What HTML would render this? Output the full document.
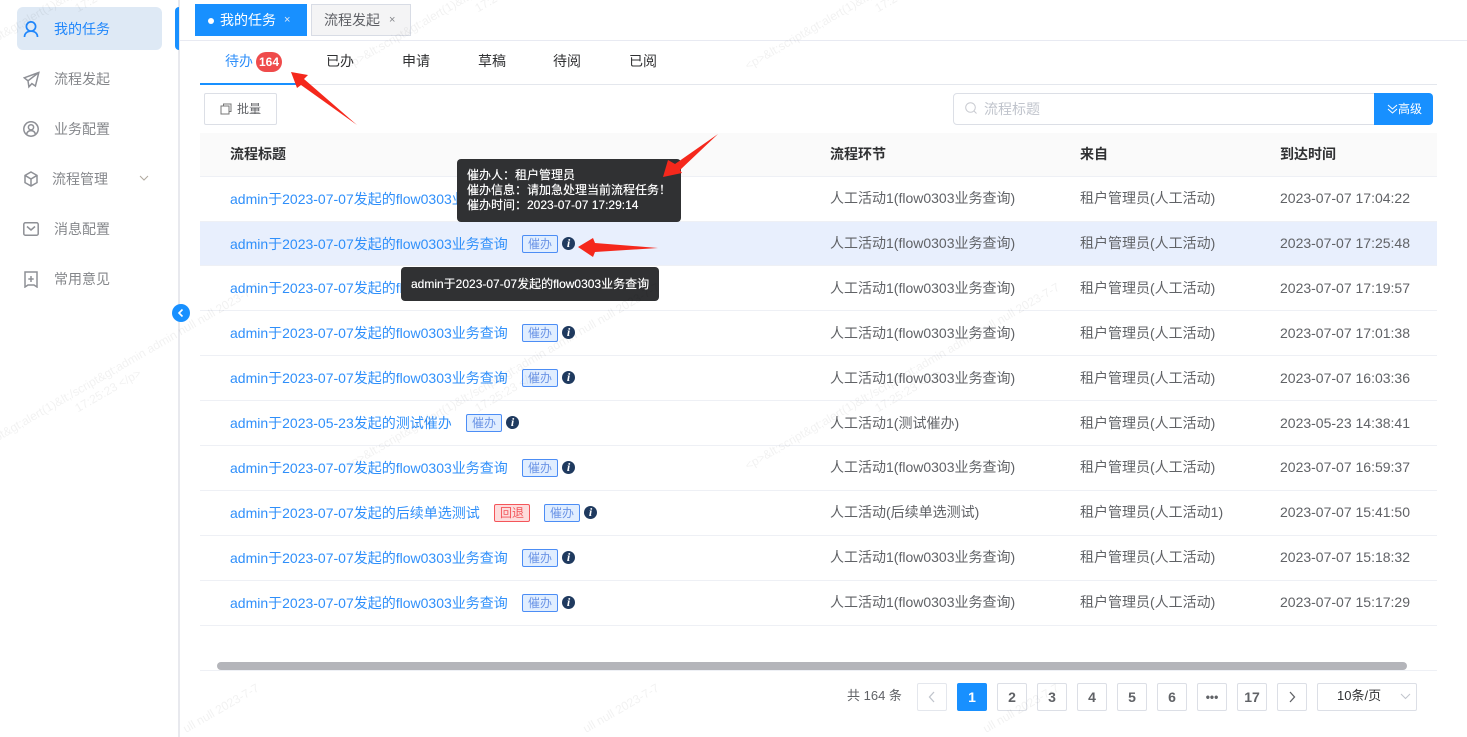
<!DOCTYPE html>
<html lang="zh"><head><meta charset="utf-8"><title>我的任务</title>
<style>
*{box-sizing:border-box}
html,body{margin:0;padding:0;width:1467px;height:737px;overflow:hidden;background:#fff;font-family:"Liberation Sans","Noto Sans CJK SC",sans-serif;font-size:14px;color:#606266}
.a{position:absolute;white-space:nowrap}
.side{position:absolute;left:0;top:0;width:180px;height:737px;border-right:2px solid #e8e9ee}
.nav{position:absolute;left:54px;color:#85878b;line-height:20px}
.ic{position:absolute;fill:none;stroke:#8e9096;stroke-width:1.5}
.row{position:absolute;left:200px;width:1237px;height:45px;border-bottom:1px solid #eef0f5}
.row span{position:absolute;top:12px;line-height:20px;white-space:nowrap}
.row .t{left:30px;color:#2f8ffa}
.row .c{left:630px}.row .f{left:880px}.row .d{left:1080px}
.row.u .c,.row.u .f,.row.u .d{top:11px}
.row .tag{top:13px;height:18px;width:36px;line-height:16px;border:1px solid #4c8df5;background:#e1eeff;color:#6c95e6;font-size:12px;text-align:center;border-radius:2px}
.row .tag.r{border-color:#f4555a;background:#fddcdc;color:#f2555a}
.row .i{top:15px;width:13px;height:13px;line-height:13px;border-radius:50%;background:#1f3a5f;color:#fff;font:italic bold 12px/13px "Liberation Serif",serif;text-align:center}
.th{position:absolute;top:144px;font-weight:bold;color:#303133;line-height:20px}
.tab{position:absolute;top:51px;line-height:20px;color:#303133}
.pg{position:absolute;top:683px;width:30px;height:28px;border:1px solid #dcdfe6;border-radius:2px;background:#fff;text-align:center;line-height:26px;font-weight:bold;color:#606266;font-size:14px}
.tip{position:absolute;background:#303133;color:#fff;border-radius:4px;font-size:12px;white-space:nowrap;text-shadow:0 0 .4px #fff}
</style></head><body>

<div class="side"></div>
<div class="a" style="left:17px;top:7px;width:145px;height:43px;background:#dee9f5;border-radius:6px"></div>
<div class="a" style="left:175px;top:7px;width:4px;height:43px;background:#1890ff;border-radius:4px 0 0 4px"></div>

<svg class="ic" style="left:22px;top:20px;stroke:#1f86fb;stroke-width:1.7" width="18" height="18" viewBox="0 0 18 18"><circle cx="9" cy="6.500" r="4.600"/><path d="M2.500 17c0-3.600 2.600-5.800 6.500-5.800s6.500 2.200 6.500 5.800"/></svg>
<div class="nav" style="left:54px;top:19px;color:#1f86fb">我的任务</div>

<svg class="ic" style="left:23px;top:71px" width="17" height="18" viewBox="0 0 17 18"><path d="M15.800 1.500 1.200 6.800l3.800 3 .9 6 3-3.200 3.500 2.400zM5 9.800 15.800 1.500"/></svg>
<div class="nav" style="top:69px">流程发起</div>

<svg class="ic" style="left:23px;top:121px" width="16" height="16" viewBox="0 0 16 16"><circle cx="8" cy="8" r="7.200"/><circle cx="8" cy="6.300" r="2.600"/><path d="M3.500 13.500c.5-2.600 2.300-3.900 4.500-3.900s4 1.300 4.500 3.900"/></svg>
<div class="nav" style="top:119px">业务配置</div>

<svg class="ic" style="left:24px;top:171px" width="14" height="16" viewBox="0 0 14 16"><path d="M7 1 13 4.400v7.200L7 15 1 11.600V4.400zM1.500 4.700 7 8l5.500-3.300M7 8v6.500"/></svg>
<div class="nav" style="left:52px;top:169px">流程管理</div>
<svg class="ic" style="left:139px;top:175px;stroke:#b0a99e;stroke-width:1" width="10" height="6" viewBox="0 0 10 6"><path d="M1 1l4 4 4-4"/></svg>

<svg class="ic" style="left:23px;top:222px" width="16" height="14" viewBox="0 0 16 14"><rect x=".8" y=".8" width="14.400" height="12.400" rx="1.500"/><path d="M4 4.500 8 8l4-3.500"/></svg>
<div class="nav" style="top:219px">消息配置</div>

<svg class="ic" style="left:24px;top:271px" width="14" height="17" viewBox="0 0 14 17"><path d="M1 1h12v15l-3-2H4l-3 2zM7 5v6M4.300 8h5.400"/></svg>
<div class="nav" style="top:269px">常用意见</div>

<div class="a" style="left:172px;top:304px;width:18px;height:18px;border-radius:50%;background:#1890ff"></div>
<svg class="a" style="left:172px;top:304px" width="18" height="18" viewBox="0 0 18 18"><path d="M10.500 5.500 7 9l3.500 3.500" fill="none" stroke="#fff" stroke-width="1.600"/></svg>

<div class="a" style="left:195px;top:4px;width:112px;height:32px;background:#1890ff"></div>
<div class="a" style="left:208px;top:18px;width:6px;height:6px;border-radius:50%;background:#fff"></div>
<div class="a" style="left:220px;top:10px;line-height:20px;color:#fff">我的任务</div>
<div class="a" style="left:284px;top:11px;line-height:18px;color:#dfe9f7;font-size:11px">×</div>
<div class="a" style="left:311px;top:4px;width:100px;height:32px;background:#f4f4f5;border:1px solid #d8dce5"></div>
<div class="a" style="left:324px;top:10px;line-height:20px;color:#5f6166">流程发起</div>
<div class="a" style="left:389px;top:11px;line-height:18px;color:#85878b;font-size:11px">×</div>
<div class="a" style="left:180px;top:40px;width:1287px;height:1px;background:#e8eaf2"></div>

<div class="tab" style="left:225px;color:#2f8ffa">待办</div>
<div class="a" style="left:256px;top:52px;width:26px;height:20px;border-radius:10px;background:#ef4b4b;color:#fff;font-size:12px;font-weight:bold;line-height:20px;text-align:center">164</div>
<div class="tab" style="left:326px">已办</div>
<div class="tab" style="left:402px">申请</div>
<div class="tab" style="left:478px">草稿</div>
<div class="tab" style="left:553px">待阅</div>
<div class="tab" style="left:629px">已阅</div>
<div class="a" style="left:200px;top:84px;width:1237px;height:1px;background:#e4e7ed"></div>
<div class="a" style="left:200px;top:83px;width:96px;height:2px;background:#1890ff"></div>

<div class="a" style="left:204px;top:93px;width:73px;height:32px;border:1px solid #dcdfe6;border-radius:2px"></div>
<svg class="a" style="left:220px;top:103px" width="12" height="12" viewBox="0 0 12 12"><path d="M3.500 2.500V1h7.500v7.500H9.500M1 3h8v8H1z" fill="none" stroke="#777" stroke-width="1"/></svg>
<div class="a" style="left:237px;top:99px;line-height:20px;font-size:12px;color:#606266">批量</div>

<div class="a" style="left:953px;top:93px;width:422px;height:32px;border:1px solid #dcdfe6;border-radius:4px 0 0 4px"></div>
<svg class="a" style="left:964px;top:101px" width="14" height="14" viewBox="0 0 14 14"><circle cx="6.500" cy="6.500" r="4.800" fill="none" stroke="#c8cad0" stroke-width="1"/><path d="M10 10l2.500 2.500" stroke="#c8cad0"/></svg>
<div class="a" style="left:984px;top:99px;line-height:20px;color:#c0c4cc">流程标题</div>
<div class="a" style="left:1374px;top:93px;width:59px;height:32px;background:#1890ff;border-radius:0 4px 4px 0"></div>
<svg class="a" style="left:1387px;top:104px" width="11" height="10" viewBox="0 0 11 10"><path d="M1 1l4.500 4L10 1M1 5l4.500 4L10 5" fill="none" stroke="#fff" stroke-width="1"/></svg>
<div class="a" style="left:1398px;top:99px;line-height:20px;color:#fff;font-size:12px">高级</div>

<div class="a" style="left:200px;top:133px;width:1237px;height:44px;background:#fafafa;border-bottom:1px solid #eef0f5"></div>
<div class="th" style="left:230px">流程标题</div>
<div class="th" style="left:830px">流程环节</div>
<div class="th" style="left:1080px">来自</div>
<div class="th" style="left:1280px">到达时间</div>

<div class="row u" style="top:177px"><span class="t">admin于2023-07-07发起的flow0303业务查询</span><span class="tag" style="left:322px">催办</span><span class="i" style="left:362px">i</span><span class="c">人工活动1(flow0303业务查询)</span><span class="f">租户管理员(人工活动)</span><span class="d">2023-07-07 17:04:22</span></div>
<div class="row u" style="top:222px;height:44px;background:#e8effd"><span class="t">admin于2023-07-07发起的flow0303业务查询</span><span class="tag" style="left:322px">催办</span><span class="i" style="left:362px">i</span><span class="c">人工活动1(flow0303业务查询)</span><span class="f">租户管理员(人工活动)</span><span class="d">2023-07-07 17:25:48</span></div>
<div class="row" style="top:266px"><span class="t">admin于2023-07-07发起的flow0303业务查询</span><span class="c">人工活动1(flow0303业务查询)</span><span class="f">租户管理员(人工活动)</span><span class="d">2023-07-07 17:19:57</span></div>
<div class="row" style="top:311px"><span class="t">admin于2023-07-07发起的flow0303业务查询</span><span class="tag" style="left:322px">催办</span><span class="i" style="left:362px">i</span><span class="c">人工活动1(flow0303业务查询)</span><span class="f">租户管理员(人工活动)</span><span class="d">2023-07-07 17:01:38</span></div>
<div class="row" style="top:356px"><span class="t">admin于2023-07-07发起的flow0303业务查询</span><span class="tag" style="left:322px">催办</span><span class="i" style="left:362px">i</span><span class="c">人工活动1(flow0303业务查询)</span><span class="f">租户管理员(人工活动)</span><span class="d">2023-07-07 16:03:36</span></div>
<div class="row" style="top:401px"><span class="t">admin于2023-05-23发起的测试催办</span><span class="tag" style="left:266px">催办</span><span class="i" style="left:306px">i</span><span class="c">人工活动1(测试催办)</span><span class="f">租户管理员(人工活动)</span><span class="d">2023-05-23 14:38:41</span></div>
<div class="row u" style="top:446px"><span class="t">admin于2023-07-07发起的flow0303业务查询</span><span class="tag" style="left:322px">催办</span><span class="i" style="left:362px">i</span><span class="c">人工活动1(flow0303业务查询)</span><span class="f">租户管理员(人工活动)</span><span class="d">2023-07-07 16:59:37</span></div>
<div class="row u" style="top:491px"><span class="t">admin于2023-07-07发起的后续单选测试</span><span class="tag r" style="left:294px">回退</span><span class="tag" style="left:344px">催办</span><span class="i" style="left:384px">i</span><span class="c">人工活动(后续单选测试)</span><span class="f">租户管理员(人工活动1)</span><span class="d">2023-07-07 15:41:50</span></div>
<div class="row u" style="top:536px"><span class="t">admin于2023-07-07发起的flow0303业务查询</span><span class="tag" style="left:322px">催办</span><span class="i" style="left:362px">i</span><span class="c">人工活动1(flow0303业务查询)</span><span class="f">租户管理员(人工活动)</span><span class="d">2023-07-07 15:18:32</span></div>
<div class="row u" style="top:581px"><span class="t">admin于2023-07-07发起的flow0303业务查询</span><span class="tag" style="left:322px">催办</span><span class="i" style="left:362px">i</span><span class="c">人工活动1(flow0303业务查询)</span><span class="f">租户管理员(人工活动)</span><span class="d">2023-07-07 15:17:29</span></div>

<div class="a" style="left:217px;top:662px;width:1190px;height:8px;background:#b4b5ba;border-radius:4px"></div>
<div class="a" style="left:200px;top:670px;width:1237px;height:1px;background:#eef0f5"></div>

<div class="a" style="left:847px;top:686px;line-height:20px;font-size:13px;color:#606266">共 164 条</div>
<div class="pg" style="left:917px;border-color:#e4e7ed"><svg width="8" height="12" viewBox="0 0 8 12" style="margin-top:7px;display:inline-block"><path d="M6 1 1.500 6 6 11" fill="none" stroke="#c0c4cc" stroke-width="1.300"/></svg></div>
<div class="pg" style="left:957px;background:#1890ff;border-color:#1890ff;color:#fff">1</div>
<div class="pg" style="left:997px">2</div>
<div class="pg" style="left:1037px">3</div>
<div class="pg" style="left:1077px">4</div>
<div class="pg" style="left:1117px">5</div>
<div class="pg" style="left:1157px">6</div>
<div class="pg" style="left:1197px;font-size:12px">•••</div>
<div class="pg" style="left:1237px">17</div>
<div class="pg" style="left:1277px"><svg width="8" height="12" viewBox="0 0 8 12" style="margin-top:7px;display:inline-block"><path d="M2 1l4.500 5L2 11" fill="none" stroke="#606266" stroke-width="1.300"/></svg></div>
<div class="a" style="left:1317px;top:683px;width:100px;height:28px;border:1px solid #dcdfe6;border-radius:2px"></div>
<div class="a" style="left:1337px;top:686px;line-height:20px;font-size:13px;color:#303133">10条/页</div>
<svg class="a" style="left:1400px;top:693px" width="11" height="7" viewBox="0 0 11 7"><path d="M1 1l4.500 4.500L10 1" fill="none" stroke="#c0c4cc"/></svg>

<div class="tip" style="left:457px;top:159px;width:224px;height:63px;padding:9px 10px 0;line-height:15px">催办人：租户管理员<br>催办信息：请加急处理当前流程任务！<br>催办时间：2023-07-07 17:29:14</div>
<div class="tip" style="left:401px;top:267px;width:258px;height:34px;padding:0 10px;line-height:34px">admin于2023-07-07发起的flow0303业务查询</div>

<svg class="a" style="left:0;top:0;pointer-events:none" width="1467" height="737" viewBox="0 0 1467 737">
<g font-family="Liberation Sans,sans-serif" font-size="12" fill="#000" fill-opacity=".055">
<text transform="translate(-52 470) rotate(-30)">&lt;p&gt;&amp;lt;script&amp;gt;alert(1)&amp;lt;/script&amp;gt;admin admin null null 2023-7-7</text>
<text transform="translate(348 470) rotate(-30)">&lt;p&gt;&amp;lt;script&amp;gt;alert(1)&amp;lt;/script&amp;gt;admin admin null null 2023-7-7</text>
<text transform="translate(748 470) rotate(-30)">&lt;p&gt;&amp;lt;script&amp;gt;alert(1)&amp;lt;/script&amp;gt;admin admin null null 2023-7-7</text>
<text transform="translate(-52 70) rotate(-30)">&lt;p&gt;&amp;lt;script&amp;gt;alert(1)&amp;lt;/script&amp;gt;admin admin null null 2023-7-7</text>
<text transform="translate(348 70) rotate(-30)">&lt;p&gt;&amp;lt;script&amp;gt;alert(1)&amp;lt;/script&amp;gt;admin admin null null 2023-7-7</text>
<text transform="translate(748 70) rotate(-30)">&lt;p&gt;&amp;lt;script&amp;gt;alert(1)&amp;lt;/script&amp;gt;admin admin null null 2023-7-7</text>
<text transform="translate(186 733) rotate(-30)">ull null 2023-7-7</text>
<text transform="translate(586 733) rotate(-30)">ull null 2023-7-7</text>
<text transform="translate(986 733) rotate(-30)">ull null 2023-7-7</text>
<text transform="translate(110 394) rotate(-30)" text-anchor="middle">17:25:23 &lt;/p&gt;</text>
<text transform="translate(510 394) rotate(-30)" text-anchor="middle">17:25:23 &lt;/p&gt;</text>
<text transform="translate(910 394) rotate(-30)" text-anchor="middle">17:25:23 &lt;/p&gt;</text>
<text transform="translate(110 -6) rotate(-30)" text-anchor="middle">17:25:23 &lt;/p&gt;</text>
<text transform="translate(510 -6) rotate(-30)" text-anchor="middle">17:25:23 &lt;/p&gt;</text>
<text transform="translate(910 -6) rotate(-30)" text-anchor="middle">17:25:23 &lt;/p&gt;</text>
</g>
<polygon fill="#f5281c" points="291,72 308,75 304,79 357,125 301,85 297,88"/>
<polygon fill="#f5281c" points="663,177 668,160 675,164 718,134 680,170 682,173"/>
<polygon fill="#f5281c" points="578,247 593,238 595,243 658,248 595,252 593,257"/>
</svg>
</body></html>
